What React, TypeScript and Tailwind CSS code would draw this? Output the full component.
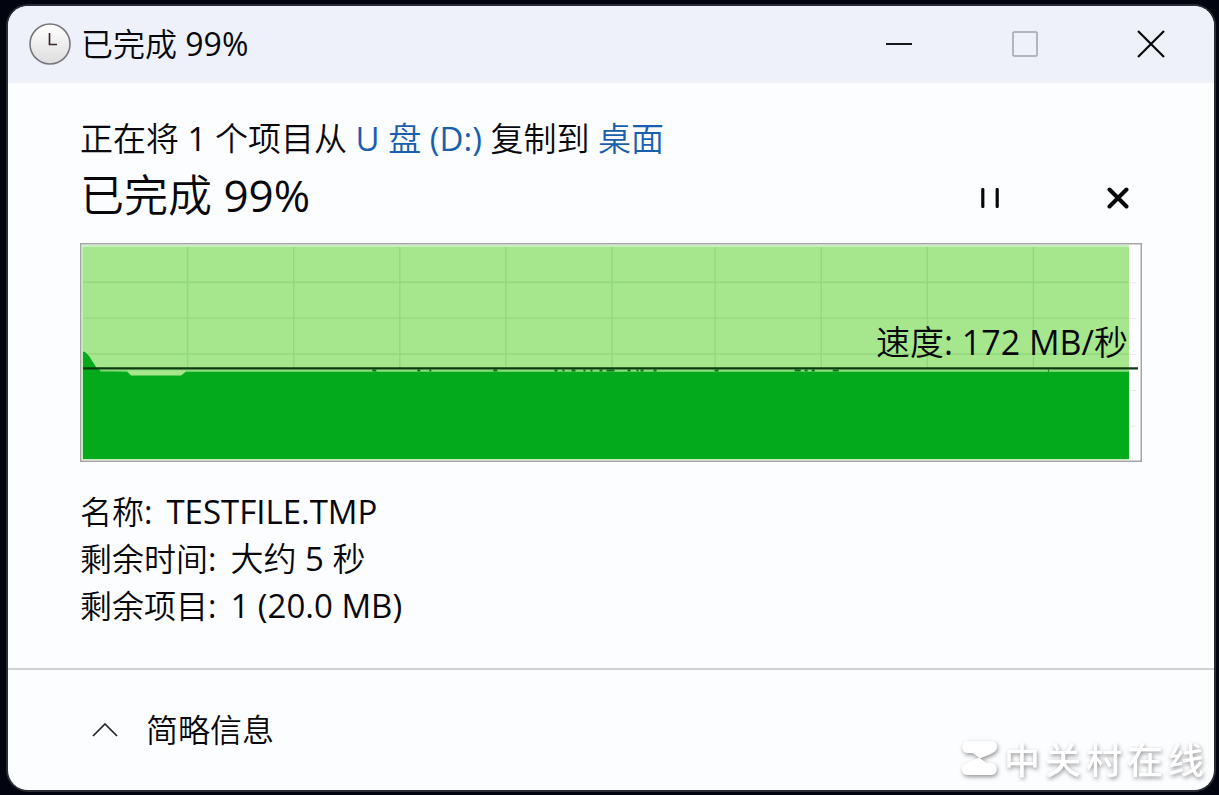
import { useState } from "react";

const FONT = "font-['Open_Sans','Noto_Sans_CJK_SC_DemiLight','Noto_Sans_CJK_SC',sans-serif]";

const details = [
  { label: "名称:", value: "TESTFILE.TMP" },
  { label: "剩余时间:", value: "大约 5 秒" },
  { label: "剩余项目:", value: "1 (20.0 MB)" },
];

const columns = [108, 214, 320, 426, 532, 635, 741, 847, 953];
const rows = [40, 76, 112, 148, 184];
const ticks = [
  [292, 4], [337, 3], [349, 2], [413, 4], [474, 3], [482, 2], [491, 4], [503, 2],
  [510, 2], [519, 3], [526, 8], [547, 3], [556, 2], [560, 3], [573, 3], [634, 4],
  [714, 6], [724, 3], [731, 3], [752, 6], [967, 1],
];

function ClockIcon() {
  return (
    <svg width="42" height="42" viewBox="0 0 42 42" aria-hidden="true">
      <defs>
        <linearGradient id="face" x1="0" y1="0" x2="0" y2="1">
          <stop offset="0" stopColor="#ffffff" />
          <stop offset="1" stopColor="#dddddf" />
        </linearGradient>
      </defs>
      <circle cx="21" cy="21" r="20" fill="url(#face)" stroke="#77777b" strokeWidth="1.6" />
      <path d="M20.5 10v11.5h7.5" fill="none" stroke="#38282c" strokeWidth="1.7" />
    </svg>
  );
}

function SpeedChart() {
  return (
    <div className="relative mt-4 h-[219px]">
      <svg
        className="block h-full w-full"
        viewBox="0 0 1061 220"
        preserveAspectRatio="none"
        role="img"
        aria-label="速度"
      >
        <rect x="0.75" y="0.75" width="1059.5" height="218.5" fill="#ffffff" stroke="#a3a6a5" strokeWidth="1.5" />
        {rows.map((y) => (
          <path key={y} d={`M1049 ${y}h6`} stroke="#e3eae3" strokeWidth="1" />
        ))}
        <rect x="2" y="2" width="1046" height="216" fill="#c9efbd" />
        <rect x="3" y="4" width="1045" height="213" fill="#a6e78d" />
        <g stroke="#93d77c" strokeWidth="1.4">
          {columns.map((x) => (
            <path key={x} d={`M${x - 0.5} 4V126`} />
          ))}
          {rows.slice(0, 3).map((y) => (
            <path key={y} d={`M3 ${y - 0.5}H1048`} />
          ))}
        </g>
        <path
          d="M3 109c2 0 5 3 7 6l7 11 4 2 26 1 4 4h50l5-4H1048V217H3z"
          fill="#03ab1c"
        />
        <path d="M20 128.5H1048" stroke="#7fdb74" strokeWidth="1.4" />
        <path d="M47 128h59l-5 4H51z" fill="#a6e78d" />
        <path d="M3 126H1057" stroke="#0c3a10" strokeWidth="2.4" />
        {ticks.map(([x, w]) => (
          <path key={x} d={`M${x} 128h${w}`} stroke="#06701a" strokeWidth="2" />
        ))}
      </svg>
      <p className="absolute top-[75px] right-3.5 text-[34px] leading-12 whitespace-nowrap">
        速度: 172 MB/秒
      </p>
    </div>
  );
}

function Watermark() {
  return (
    <div className="absolute right-2.5 bottom-2 flex items-center gap-1.5 drop-shadow-[1px_2px_2px_rgba(0,0,0,0.4)]">
      <svg width="37" height="36" viewBox="0 0 36 36" aria-hidden="true">
        <path
          d="M6 1H30C36 1 37 8 34 11 31 14 24 16 18.5 18.5L25 23H30C37 23 37 35 30 35H6C0 35-1 28 2 25 5 22 12 20 17.5 17.5L11 13H6C-1 13-1 1 6 1z"
          fill="#ffffff"
        />
      </svg>
      <div className="flex gap-[5px] font-['Noto_Sans_CJK_SC',sans-serif] text-4xl leading-12 font-medium text-white">
        {["中", "关", "村", "在", "线"].map((character) => (
          <span key={character}>{character}</span>
        ))}
      </div>
    </div>
  );
}

export default function App() {
  const [paused, setPaused] = useState(false);
  const control = "flex w-[126px] items-center justify-center";

  return (
    <div className={`flex min-h-screen flex-col bg-[#02040f] pt-1.5 pr-[5px] pb-[5px] pl-2 text-[#08080c] ${FONT}`}>
      <main className="relative flex flex-1 flex-col overflow-hidden rounded-[20px] bg-[#fcfdff] ring-2 ring-[#2b2d36]">
        <header className="flex h-[77px] bg-[#eef1fa] pb-0.5">
          <div className="flex flex-1 items-center gap-2.5 pl-[21px]">
            <ClockIcon />
            <h1 className="text-[32px] leading-12 whitespace-nowrap">已完成 99%</h1>
          </div>
          <button type="button" aria-label="最小化" className={control}>
            <svg width="28" height="28" viewBox="0 0 28 28">
              <path d="M1 14h26" stroke="#17171b" strokeWidth="2" />
            </svg>
          </button>
          <button type="button" aria-label="最大化" disabled className={control}>
            <svg width="28" height="28" viewBox="0 0 28 28">
              <rect x="2" y="2" width="24" height="24" rx="1" fill="none" stroke="#a0a2ab" strokeWidth="1.5" />
            </svg>
          </button>
          <button type="button" aria-label="关闭" className={control}>
            <svg width="28" height="28" viewBox="0 0 28 28">
              <path d="M1 1l26 26M27 1L1 27" stroke="#08080a" strokeWidth="2.2" />
            </svg>
          </button>
        </header>

        <section className="flex-1 px-[72px] pt-8">
          <p className="text-[33px] leading-12">
            正在将 1 个项目从{" "}
            <a href="#source" className="text-[#1a5fae]">U 盘 (D:)</a> 复制到{" "}
            <a href="#target" className="text-[#1a5fae]">桌面</a>
          </p>
          <div className="flex h-16 items-center justify-between">
            <h2 className="text-[44px] leading-16">已完成 99%</h2>
            <div className="flex gap-20 pt-1.5">
              <button
                type="button"
                aria-label="暂停"
                aria-pressed={paused}
                onClick={() => setPaused(!paused)}
                className="flex size-12 items-center justify-center"
              >
                <svg width="20" height="20" viewBox="0 0 20 20">
                  <path d="M2.8 1.5v17M17.2 1.5v17" stroke="#08080a" strokeWidth="3.2" strokeLinecap="round" />
                </svg>
              </button>
              <button type="button" aria-label="取消" className="flex size-12 items-center justify-center">
                <svg width="22" height="22" viewBox="0 0 22 22">
                  <path d="M2.5 2.5l17 17M19.5 2.5l-17 17" stroke="#08080a" strokeWidth="4" strokeLinecap="round" />
                </svg>
              </button>
            </div>
          </div>
          <SpeedChart />
          <dl className="mt-6.5 leading-[47px]">
            {details.map(({ label, value }) => (
              <div key={label} className="flex items-baseline gap-3.5">
                <dt className="text-[32px]">{label}</dt>
                <dd className="text-[33px]">{value}</dd>
              </div>
            ))}
          </dl>
        </section>

        <footer className="flex h-[122px] items-center border-t-2 border-[#d0d1d4] px-[72px]">
          <button type="button" className="flex items-center gap-7 pl-3 text-[32px] leading-12">
            <svg width="26" height="14" viewBox="0 0 26 14" aria-hidden="true">
              <path d="M1 13L13 1l12 12" fill="none" stroke="#242428" strokeWidth="1.7" />
            </svg>
            简略信息
          </button>
        </footer>
        <Watermark />
      </main>
    </div>
  );
}
